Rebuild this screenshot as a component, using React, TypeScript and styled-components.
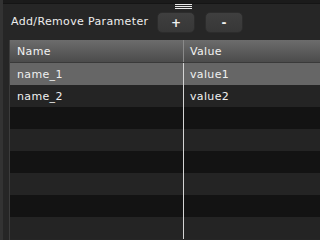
import React from "react";
import styled, { createGlobalStyle } from "styled-components";

const Global = createGlobalStyle`
  html, body { margin: 0; padding: 0; background: #252525; }
  body { width: 320px; height: 240px; overflow: hidden; }
`;

const Root = styled.div`
  position: relative;
  width: 320px;
  height: 240px;
  display: flex;
  background: #262626;
  font-family: "DejaVu Sans", "Liberation Sans", sans-serif;
  font-size: 11px;
  color: #ececec;
  overflow: hidden;
`;

const LeftStrip = styled.div`
  width: 3px;
  flex: none;
  background: #333333;
`;

const Content = styled.div`
  flex: 1;
  display: flex;
  flex-direction: column;
  padding-left: 6px;
  min-width: 0;
`;

const TopBar = styled.div`
  height: 3px;
  margin-left: -6px;
  background: #1b1b1b;
  border-bottom: 1px solid #151515;
`;

const Grip = styled.div`
  position: absolute;
  left: 175px;
  top: 4px;
  width: 17px;
  height: 5px;
  border-top: 1px solid #e8e8e8;
  border-bottom: 1px solid #e8e8e8;
  box-sizing: border-box;
  &::after {
    content: "";
    position: absolute;
    left: 0;
    right: 0;
    top: 1px;
    height: 1px;
    background: #e8e8e8;
  }
`;

const Toolbar = styled.div`
  height: 36px;
  display: flex;
  align-items: flex-start;
  padding-left: 2px;
  box-sizing: border-box;
`;

const Label = styled.div`
  margin-top: 11px;
  width: 146px;
  letter-spacing: 0.35px;
  white-space: nowrap;
  color: #ededed;
`;

const ToolButton = styled.button`
  margin-top: 8px;
  margin-right: 10px;
  width: 38px;
  height: 21px;
  border: 1px solid #2c2c2c;
  border-radius: 5px;
  background: linear-gradient(#3f3f3f, #373737);
  color: #f0f0f0;
  font-family: "DejaVu Sans", sans-serif;
  font-size: 12px;
  font-weight: bold;
  padding: 0;
  display: flex;
  align-items: center;
  justify-content: center;
`;

const Table = styled.div`
  flex: 1;
  display: flex;
  flex-direction: column;
  border-left: 1px solid #3c3c3c;
`;

const HeaderRow = styled.div`
  height: 22px;
  flex: none;
  display: grid;
  grid-template-columns: 173px 1fr;
  background: linear-gradient(#6c6c6c, #4b4b4b);
  border-bottom: 1px solid #3a3a3a;
  color: #f2f2f2;
  letter-spacing: 0.35px;
`;

const Row = styled.div<{ $tone: "sel" | "light" | "dark" }>`
  height: 22px;
  flex: none;
  display: grid;
  grid-template-columns: 173px 1fr;
  background: ${(p) =>
    p.$tone === "sel" ? "#666666" : p.$tone === "light" ? "#242424" : "#131313"};
  color: #f0f0f0;
  letter-spacing: 0.35px;
`;

const Cell = styled.div<{ $divider?: boolean; $head?: boolean }>`
  display: flex;
  align-items: center;
  padding-left: ${(p) => (p.$divider ? "6px" : "7px")};
  border-left: ${(p) => (p.$divider ? `1px solid ${p.$head ? "#8a8a8a" : "#d4d4d4"}` : "none")};
  white-space: nowrap;
`;

const rows = [
  ["name_1", "value1"],
  ["name_2", "value2"],
  ["", ""],
  ["", ""],
  ["", ""],
  ["", ""],
  ["", ""],
  ["", ""],
];

export default function App() {
  return (
    <Root>
      <Global />
      <LeftStrip />
      <Content>
        <TopBar />
        <Toolbar>
          <Label>Add/Remove Parameter</Label>
          <ToolButton>+</ToolButton>
          <ToolButton>-</ToolButton>
        </Toolbar>
        <Table>
          <HeaderRow>
            <Cell $head>Name</Cell>
            <Cell $head $divider>Value</Cell>
          </HeaderRow>
          {rows.map((r, i) => (
            <Row key={i} $tone={i === 0 ? "sel" : i % 2 === 1 ? "light" : "dark"}>
              <Cell>{r[0]}</Cell>
              <Cell $divider>{r[1]}</Cell>
            </Row>
          ))}
        </Table>
      </Content>
      <Grip />
    </Root>
  );
}
